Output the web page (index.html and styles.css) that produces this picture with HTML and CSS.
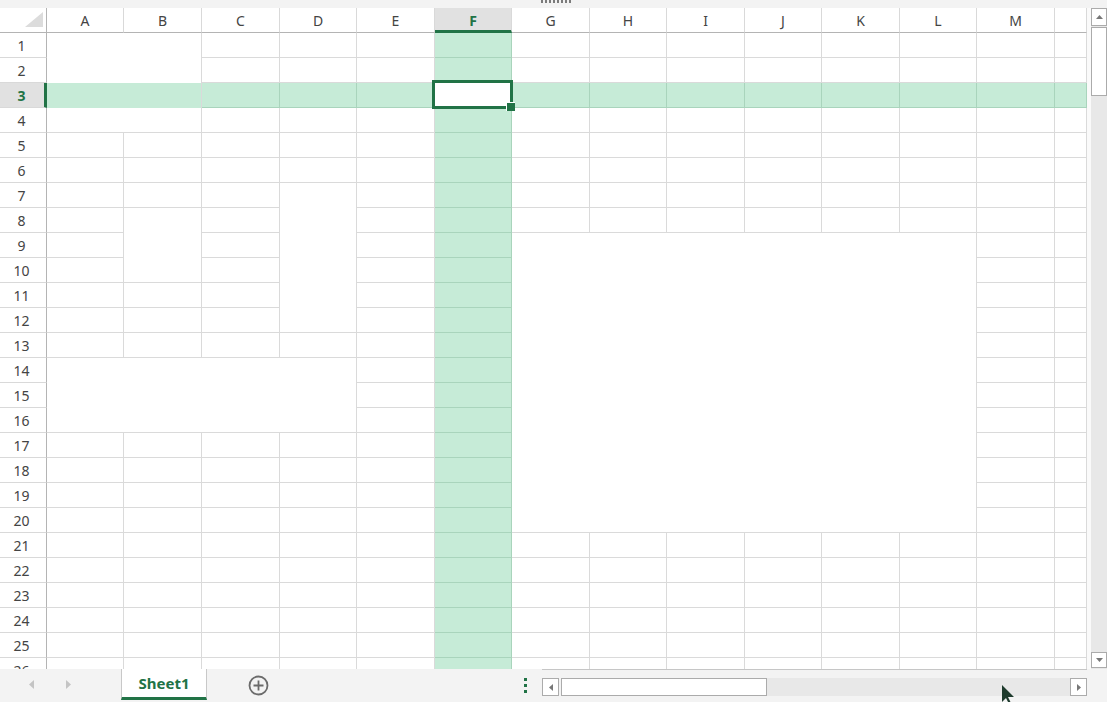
FILE: index.html
```html
<!DOCTYPE html>
<html>
<head>
<meta charset="utf-8">
<title>Sheet1</title>
<link rel="stylesheet" href="styles.css">
</head>
<body>
<div class="app">
  <div class="topbar"><div class="grip"></div></div>
  <div class="main">
    <div class="sheet">
      <div class="corner"><svg width="18" height="15" viewBox="0 0 18 15"><polygon points="18,0 18,15 0,15" fill="#dcdcdc"/></svg></div>
      <div class="ch">A</div><div class="ch">B</div><div class="ch">C</div><div class="ch">D</div><div class="ch">E</div><div class="ch sel">F</div><div class="ch">G</div><div class="ch">H</div><div class="ch">I</div><div class="ch">J</div><div class="ch">K</div><div class="ch">L</div><div class="ch">M</div><div class="ch"></div>

      <div class="m mA1"><div class="band"></div></div>
      <div class="m mD7"></div>
      <div class="m mB8"></div>
      <div class="m mA14"></div>
      <div class="m mG9"></div>

      <div class="rh">1</div><div class="c"></div><div class="c"></div><div class="c"></div><div class="c f"></div><div class="c"></div><div class="c"></div><div class="c"></div><div class="c"></div><div class="c"></div><div class="c"></div><div class="c"></div><div class="c"></div>
      <div class="rh">2</div><div class="c"></div><div class="c"></div><div class="c"></div><div class="c f"></div><div class="c"></div><div class="c"></div><div class="c"></div><div class="c"></div><div class="c"></div><div class="c"></div><div class="c"></div><div class="c"></div>
      <div class="rh sel">3</div><div class="c r"></div><div class="c r"></div><div class="c r"></div><div class="c act"></div><div class="c r"></div><div class="c r"></div><div class="c r"></div><div class="c r"></div><div class="c r"></div><div class="c r"></div><div class="c r"></div><div class="c r"></div>
      <div class="rh">4</div><div class="c"></div><div class="c"></div><div class="c"></div><div class="c f"></div><div class="c"></div><div class="c"></div><div class="c"></div><div class="c"></div><div class="c"></div><div class="c"></div><div class="c"></div><div class="c"></div>
      <div class="rh">5</div><div class="c"></div><div class="c"></div><div class="c"></div><div class="c"></div><div class="c"></div><div class="c f"></div><div class="c"></div><div class="c"></div><div class="c"></div><div class="c"></div><div class="c"></div><div class="c"></div><div class="c"></div><div class="c"></div>
      <div class="rh">6</div><div class="c"></div><div class="c"></div><div class="c"></div><div class="c"></div><div class="c"></div><div class="c f"></div><div class="c"></div><div class="c"></div><div class="c"></div><div class="c"></div><div class="c"></div><div class="c"></div><div class="c"></div><div class="c"></div>
      <div class="rh">7</div><div class="c"></div><div class="c"></div><div class="c"></div><div class="c"></div><div class="c f"></div><div class="c"></div><div class="c"></div><div class="c"></div><div class="c"></div><div class="c"></div><div class="c"></div><div class="c"></div><div class="c"></div>
      <div class="rh">8</div><div class="c"></div><div class="c"></div><div class="c"></div><div class="c f"></div><div class="c"></div><div class="c"></div><div class="c"></div><div class="c"></div><div class="c"></div><div class="c"></div><div class="c"></div><div class="c"></div>
      <div class="rh">9</div><div class="c"></div><div class="c"></div><div class="c"></div><div class="c f"></div><div class="c"></div><div class="c"></div>
      <div class="rh">10</div><div class="c"></div><div class="c"></div><div class="c"></div><div class="c f"></div><div class="c"></div><div class="c"></div>
      <div class="rh">11</div><div class="c"></div><div class="c"></div><div class="c"></div><div class="c"></div><div class="c f"></div><div class="c"></div><div class="c"></div>
      <div class="rh">12</div><div class="c"></div><div class="c"></div><div class="c"></div><div class="c"></div><div class="c f"></div><div class="c"></div><div class="c"></div>
      <div class="rh">13</div><div class="c"></div><div class="c"></div><div class="c"></div><div class="c"></div><div class="c"></div><div class="c f"></div><div class="c"></div><div class="c"></div>
      <div class="rh">14</div><div class="c"></div><div class="c f"></div><div class="c"></div><div class="c"></div>
      <div class="rh">15</div><div class="c"></div><div class="c f"></div><div class="c"></div><div class="c"></div>
      <div class="rh">16</div><div class="c"></div><div class="c f"></div><div class="c"></div><div class="c"></div>
      <div class="rh">17</div><div class="c"></div><div class="c"></div><div class="c"></div><div class="c"></div><div class="c"></div><div class="c f"></div><div class="c"></div><div class="c"></div>
      <div class="rh">18</div><div class="c"></div><div class="c"></div><div class="c"></div><div class="c"></div><div class="c"></div><div class="c f"></div><div class="c"></div><div class="c"></div>
      <div class="rh">19</div><div class="c"></div><div class="c"></div><div class="c"></div><div class="c"></div><div class="c"></div><div class="c f"></div><div class="c"></div><div class="c"></div>
      <div class="rh">20</div><div class="c"></div><div class="c"></div><div class="c"></div><div class="c"></div><div class="c"></div><div class="c f"></div><div class="c"></div><div class="c"></div>
      <div class="rh">21</div><div class="c"></div><div class="c"></div><div class="c"></div><div class="c"></div><div class="c"></div><div class="c f"></div><div class="c"></div><div class="c"></div><div class="c"></div><div class="c"></div><div class="c"></div><div class="c"></div><div class="c"></div><div class="c"></div>
      <div class="rh">22</div><div class="c"></div><div class="c"></div><div class="c"></div><div class="c"></div><div class="c"></div><div class="c f"></div><div class="c"></div><div class="c"></div><div class="c"></div><div class="c"></div><div class="c"></div><div class="c"></div><div class="c"></div><div class="c"></div>
      <div class="rh">23</div><div class="c"></div><div class="c"></div><div class="c"></div><div class="c"></div><div class="c"></div><div class="c f"></div><div class="c"></div><div class="c"></div><div class="c"></div><div class="c"></div><div class="c"></div><div class="c"></div><div class="c"></div><div class="c"></div>
      <div class="rh">24</div><div class="c"></div><div class="c"></div><div class="c"></div><div class="c"></div><div class="c"></div><div class="c f"></div><div class="c"></div><div class="c"></div><div class="c"></div><div class="c"></div><div class="c"></div><div class="c"></div><div class="c"></div><div class="c"></div>
      <div class="rh">25</div><div class="c"></div><div class="c"></div><div class="c"></div><div class="c"></div><div class="c"></div><div class="c f"></div><div class="c"></div><div class="c"></div><div class="c"></div><div class="c"></div><div class="c"></div><div class="c"></div><div class="c"></div><div class="c"></div>
      <div class="rh">26</div><div class="c"></div><div class="c"></div><div class="c"></div><div class="c"></div><div class="c"></div><div class="c f"></div><div class="c"></div><div class="c"></div><div class="c"></div><div class="c"></div><div class="c"></div><div class="c"></div><div class="c"></div><div class="c"></div>
    </div>
    <div class="vscroll">
      <div class="vtrack">
        <div class="sbtn vbtn"><svg width="7" height="4" viewBox="0 0 7 4"><polygon points="0,4 7,4 3.5,0" fill="#777"/></svg></div>
        <div class="vthumb"></div>
        <div class="vspace"></div>
        <div class="sbtn vbtn down"><svg width="7" height="4" viewBox="0 0 7 4"><polygon points="0,0 7,0 3.5,4" fill="#777"/></svg></div>
      </div>
    </div>
  </div>
  <div class="bottombar">
    <div class="nav">
      <svg class="navl" width="5" height="9" viewBox="0 0 5 9"><polygon points="5,0 5,9 0,4.5" fill="#c4c4c4"/></svg>
      <svg class="navr" width="5" height="9" viewBox="0 0 5 9"><polygon points="0,0 0,9 5,4.5" fill="#c4c4c4"/></svg>
    </div>
    <div class="tab">Sheet1</div>
    <div class="add"><svg width="21" height="21" viewBox="0 0 21 21"><circle cx="10.5" cy="10.5" r="9" fill="none" stroke="#6b6b6b" stroke-width="1.8"/><path d="M10.5 5.5v10M5.5 10.5h10" stroke="#6b6b6b" stroke-width="1.8"/></svg></div>
    <div class="dots"><i></i><i></i><i></i></div>
    <div class="hscroll">
      <div class="htrack">
        <div class="sbtn hbtn"><svg width="4" height="7" viewBox="0 0 4 7"><polygon points="4,0 4,7 0,3.5" fill="#777"/></svg></div>
        <div class="hgap"></div>
        <div class="hthumb"></div>
        <div class="hspace"></div>
        <div class="sbtn hbtn"><svg width="4" height="7" viewBox="0 0 4 7"><polygon points="0,0 0,7 4,3.5" fill="#777"/></svg></div>
      </div>
    </div>
  </div>
  <svg class="cursor" width="14" height="20" viewBox="0 0 14 20"><polygon points="0,0 0,17 4,13 7,19 9,18 6,12 12,12" fill="#1e3b2d"/></svg>
</div>
</body>
</html>
```

FILE: styles.css
```css
* { box-sizing: border-box; margin: 0; padding: 0; }
html, body { width: 1107px; height: 702px; overflow: hidden; }
body {
  font-family: "Noto Sans", "Open Sans", sans-serif;
  background: #f3f3f3;
  color: #444;
}
.app { position: relative; width: 1107px; height: 702px; }

.topbar { height: 8px; background: #f3f3f3; display: flex; }
.grip {
  margin-left: 541px;
  width: 30px;
  height: 3px;
  background: repeating-linear-gradient(90deg, #7c7c7c 0 2px, transparent 2px 4px);
}

.main { display: flex; height: 661px; }

.sheet {
  width: 1087px;
  height: 661px;
  overflow: hidden;
  background: #fff;
  display: grid;
  grid-template-columns: 47px 77px 78px 78px 77px 78px 77px 78px 77px 78px 77px 78px 77px 78px 32px;
  grid-template-rows: repeat(27, 25px);
}

.corner {
  border-right: 1px solid #b4b4b4;
  border-bottom: 1px solid #b4b4b4;
  display: flex;
  align-items: flex-end;
  justify-content: flex-end;
  padding: 0 3px 5px 0;
}

.ch {
  border-right: 1px solid #d9d9d9;
  border-bottom: 1px solid #b4b4b4;
  display: flex;
  align-items: center;
  justify-content: center;
  font-size: 14px;
  color: #444;
}
.ch.sel {
  background: #e1e1e1;
  color: #217346;
  font-weight: 700;
  border-bottom: 3px solid #217346;
  padding-top: 2px;
}

.rh {
  border-right: 1px solid #b4b4b4;
  border-bottom: 1px solid #d9d9d9;
  display: flex;
  align-items: center;
  justify-content: center;
  padding-right: 3px;
  font-size: 14px;
  color: #444;
}
.rh.sel {
  background: #e1e1e1;
  color: #217346;
  font-weight: 700;
  border-right: 3px solid #217346;
  padding-right: 1px;
}

.c, .m {
  background: #fff;
  border-right: 1px solid #dadada;
  border-bottom: 1px solid #dadada;
}
.f, .r {
  background: #c6ebd7;
  border-right-color: #a9d4bc;
  border-bottom-color: #a9d4bc;
}

.mA1 { grid-column: 2 / span 2; grid-row: 2 / span 4; padding-top: 50px; }
.band { height: 25px; background: #c6ebd7; }
.mD7 { grid-column: 5; grid-row: 8 / span 6; }
.mB8 { grid-column: 3; grid-row: 9 / span 3; }
.mA14 { grid-column: 2 / span 4; grid-row: 15 / span 3; }
.mG9 { grid-column: 8 / span 6; grid-row: 10 / span 12; }

.act { position: relative; z-index: 2; background: #fff; }
.act::before {
  content: "";
  position: absolute;
  left: -3px;
  top: -3px;
  right: -2px;
  bottom: -2px;
  border: 3px solid #217346;
}
.act::after {
  content: "";
  position: absolute;
  right: -4px;
  bottom: -4px;
  width: 8px;
  height: 8px;
  background: #217346;
  border-left: 1px solid #fff;
  border-top: 1px solid #fff;
}

.vscroll { width: 20px; background: #fafafa; padding-left: 4px; display: flex; }
.vtrack { flex: 1; background: #e8e8e8; display: flex; flex-direction: column; }
.sbtn {
  background: #fff;
  border: 1px solid #ababab;
  display: flex;
  align-items: center;
  justify-content: center;
}
.vbtn { height: 18px; }
.vbtn.down { height: 16px; margin-bottom: 1px; }
.vthumb { height: 69px; margin-top: 1px; background: #fff; border: 1px solid #ababab; }
.vspace { flex: 1; }

.bottombar { height: 33px; display: flex; background: #f3f3f3; }
.nav { width: 121px; display: flex; align-items: center; padding: 0 0 2px 29px; gap: 32px; }
.tab {
  width: 86px;
  height: 31px;
  background: #fff;
  border-left: 1px solid #c8c8c8;
  border-right: 1px solid #c8c8c8;
  border-bottom: 3px solid #217346;
  color: #217346;
  font-weight: 700;
  font-size: 15px;
  display: flex;
  align-items: center;
  justify-content: center;
}
.add { margin-left: 41px; width: 21px; display: flex; align-items: center; padding-bottom: 1px; }
.dots {
  margin-left: 255px;
  width: 18px;
  display: flex;
  flex-direction: column;
  justify-content: center;
  gap: 3px;
  padding-bottom: 1px;
}
.dots i { display: block; width: 3px; height: 3px; background: #217346; }
.hscroll { width: 545px; border-top: 1px solid #c6c6c6; padding-top: 8px; }
.htrack { height: 18px; display: flex; background: #e8e8e8; }
.hbtn { width: 17px; }
.hgap { width: 2px; background: #f3f3f3; }
.hthumb { width: 206px; background: #fff; border: 1px solid #ababab; }
.hspace { flex: 1; }

.cursor { position: absolute; left: 1002px; top: 685px; }
```
